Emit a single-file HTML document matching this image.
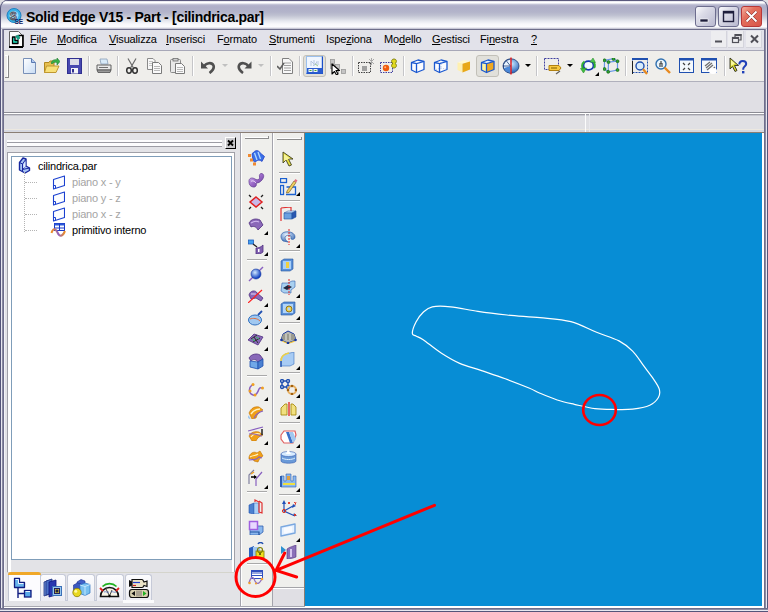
<!DOCTYPE html><html><head><meta charset="utf-8"><style>
*{margin:0;padding:0;box-sizing:border-box}
html,body{width:768px;height:612px;overflow:hidden;background:#fff;font-family:"Liberation Sans",sans-serif}
.a{position:absolute;display:block}
#title{left:0;top:0;width:768px;height:30px;border-radius:8px 8px 0 0;box-shadow:inset 1px 0 #55557a,inset -1px 0 #55557a;
background:linear-gradient(to bottom,#5b5a7e 0,#5b5a7e 1px,#d8d8e4 1px,#ffffff 2px,#ffffff 3px,#cfd0df 4px,#b6b6cd 5px,#afafc8 7px,#b3b4ca 12px,#bdbfd0 15px,#d0d2dd 18px,#e6e8ef 21px,#f8f8fb 24px,#fcfcfe 27px,#c8c8d6 28.5px,#6e6e8a 29px,#6e6e8a 30px)}
#ttxt{left:26px;top:9px;font-size:14px;letter-spacing:-0.3px;font-weight:bold;color:#000;white-space:nowrap}
.mi{position:absolute;top:33px;font-size:11px;letter-spacing:-0.15px;color:#000;white-space:nowrap}
.sep{position:absolute;width:2px;height:20px;top:56px;border-left:1px solid #c5c5c8;border-right:1px solid #fff}
.tbtn{position:absolute;border:1px solid #c2c0b8;border-radius:3px;background:#e1e0da}
.tri{position:absolute;width:0;height:0;border-left:3px solid transparent;border-right:3px solid transparent;border-top:3px solid #000}
.trg{position:absolute;width:0;height:0;border-left:2px solid transparent;border-top:2px solid transparent;border-right:2px solid #000;border-bottom:2px solid #000}
.vsep{position:absolute;height:2px;border-top:1px solid #a9a9a9;border-bottom:1px solid #fff}
.tab{position:absolute;top:574px;height:27px;border:1px solid #c6cad8;border-bottom:none;border-radius:3px 3px 0 0;background:linear-gradient(#fcfcfe,#ececf2)}
.tree{position:absolute;font-size:11px;letter-spacing:-0.2px;white-space:nowrap}
</style></head><body>
<div class="a" style="left:0;top:0;width:768px;height:612px;background:#e0dfe3"></div>
<div id="title" class="a"></div>
<div class="a" style="left:0;top:29px;width:4px;height:583px;background:linear-gradient(to right,#55557a 1px,#e8e8f0 1px,#e8e8f0 2px,#8a8aa2 2px,#8a8aa2 3px,#6e6e8c 3px)"></div>
<div class="a" style="left:764px;top:29px;width:4px;height:583px;background:linear-gradient(to right,#6e6e8c 1px,#8a8aa2 1px,#8a8aa2 2px,#e8e8f0 2px,#e8e8f0 3px,#55557a 3px)"></div>
<div class="a" style="left:0;top:608px;width:768px;height:4px;background:linear-gradient(to bottom,#6e6e8c 1px,#8a8aa2 1px,#8a8aa2 2px,#e8e8f0 2px,#e8e8f0 3px,#55557a 3px)"></div>
<svg class="a" style="left:6px;top:8px" width="18" height="17" viewBox="0 0 18 17"><circle cx="8" cy="7.5" r="7" fill="#38b0e8" stroke="#2080c0" stroke-width="1"/><circle cx="8" cy="7.5" r="4.5" fill="#a0dcf4"/><text x="4" y="11.5" font-size="10" font-weight="bold" fill="#f0f0f4" stroke="#505060" stroke-width="0.9" font-family="Liberation Sans">S</text><text x="8.5" y="16" font-size="6.5" font-weight="bold" fill="#102060" font-family="Liberation Sans">SE</text></svg>
<div id="ttxt" class="a">Solid Edge V15 - Part - [cilindrica.par]</div>
<div class="a" style="left:695px;top:6px;width:21px;height:21px;border:1px solid #6d6d8e;border-radius:3px;background:linear-gradient(135deg,#fbfbfd 0,#dcdce8 35%,#b9b9d0 100%)"></div><svg class="a" style="left:695px;top:6px" width="21" height="21" viewBox="0 0 21 21"><rect x="5" y="13" width="8" height="3" fill="#1e1e3c" stroke="#fff" stroke-width="0.6"/></svg>
<div class="a" style="left:718px;top:6px;width:21px;height:21px;border:1px solid #6d6d8e;border-radius:3px;background:linear-gradient(135deg,#fbfbfd 0,#dcdce8 35%,#b9b9d0 100%)"></div><svg class="a" style="left:718px;top:6px" width="21" height="21" viewBox="0 0 21 21"><rect x="5.5" y="5.5" width="10" height="10" fill="none" stroke="#1e1e3c" stroke-width="1.4"/><rect x="5" y="5" width="11" height="2.5" fill="#1e1e3c"/></svg>
<div class="a" style="left:741px;top:6px;width:21px;height:21px;border:1px solid #b83838;border-radius:3px;background:linear-gradient(135deg,#f4b0a0 0,#e4705e 35%,#d85448 100%)"></div><svg class="a" style="left:741px;top:6px" width="21" height="21" viewBox="0 0 21 21"><path d="M5.5 5.5 L15.5 15.5 M15.5 5.5 L5.5 15.5" stroke="#7a2020" stroke-width="3"/><path d="M5.5 5.5 L15.5 15.5 M15.5 5.5 L5.5 15.5" stroke="#fff" stroke-width="2"/></svg>
<div class="a" style="left:4px;top:30px;width:760px;height:20px;background:#e2e2ea"></div>
<div class="a" style="left:4px;top:50px;width:760px;height:1px;background:#a8a8b8"></div>
<svg class="a" style="left:9px;top:31px" width="15" height="17" viewBox="0 0 15 17"><path d="M0.5 0.5 H9.5 L13.5 4.5 V15.5 H0.5Z" fill="#fcfcfc" stroke="#606060" stroke-width="1"/><path d="M0 15 H14 V17 H0Z" fill="#000"/><path d="M9.5 4.5 H14 V16" fill="none" stroke="#000" stroke-width="1.6"/><path d="M3.5 6 H6 V9.5 H9 V12.5 H3.5Z" fill="#20e0c0" stroke="#000" stroke-width="1.3" stroke-linejoin="round"/><path d="M6.5 5 L9.5 4 L11 7 L9 9Z" fill="#10a888" stroke="#086050" stroke-width="0.5"/></svg>
<div class="mi" style="left:30px"><u>F</u>ile</div>
<div class="mi" style="left:57px"><u>M</u>odifica</div>
<div class="mi" style="left:109px"><u>V</u>isualizza</div>
<div class="mi" style="left:166px"><u>I</u>nserisci</div>
<div class="mi" style="left:217px">F<u>o</u>rmato</div>
<div class="mi" style="left:269px"><u>S</u>trumenti</div>
<div class="mi" style="left:326px">Ispe<u>z</u>iona</div>
<div class="mi" style="left:384px">Mo<u>d</u>ello</div>
<div class="mi" style="left:432px"><u>G</u>estisci</div>
<div class="mi" style="left:480px">Fi<u>n</u>estra</div>
<div class="mi" style="left:531px"><u>?</u></div>
<div class="a" style="left:711px;top:31px;width:16px;height:17px;background:#ededf0;border-right:1px solid #d4d4dc;border-bottom:1px solid #d4d4dc"></div>
<div class="a" style="left:728px;top:31px;width:16px;height:17px;background:#ededf0;border-right:1px solid #d4d4dc;border-bottom:1px solid #d4d4dc"></div>
<div class="a" style="left:746px;top:31px;width:16px;height:17px;background:#ededf0;border-right:1px solid #d4d4dc;border-bottom:1px solid #d4d4dc"></div>
<svg class="a" style="left:711px;top:31px" width="16" height="17" viewBox="0 0 16 17"><rect x="4" y="9.5" width="7" height="2" fill="#505058"/></svg>
<svg class="a" style="left:728px;top:31px" width="16" height="17" viewBox="0 0 16 17"><rect x="4.5" y="6.5" width="6" height="5" fill="none" stroke="#505058" stroke-width="1.2"/><rect x="4" y="6" width="7" height="2" fill="#505058"/><path d="M7 6 V3.5 H13 V9 H11" fill="none" stroke="#505058" stroke-width="1.2"/><rect x="7" y="3" width="6.5" height="2" fill="#505058"/></svg>
<svg class="a" style="left:746px;top:31px" width="17" height="17" viewBox="0 0 17 17"><path d="M5 4.5 L12 11.5 M12 4.5 L5 11.5" stroke="#505058" stroke-width="2"/></svg>
<div class="a" style="left:4px;top:51px;width:760px;height:30px;background:#efeeeb"></div>
<div class="a" style="left:4px;top:81px;width:760px;height:1px;background:#b0b0bc"></div>
<div class="a" style="left:5px;top:55px;width:4px;height:23px;border-top:1px solid #fff;border-right:1px solid #8a8a8a;border-bottom:1px solid #8a8a8a"></div>
<div class="a" style="left:7px;top:56px;width:1px;height:21px;background:#fff"></div>
<div class="sep" style="left:88px"></div>
<div class="sep" style="left:117px"></div>
<div class="sep" style="left:192px"></div>
<div class="sep" style="left:270px"></div>
<div class="sep" style="left:299px"></div>
<div class="sep" style="left:352px"></div>
<div class="sep" style="left:403px"></div>
<div class="sep" style="left:536px"></div>
<div class="sep" style="left:625px"></div>
<div class="sep" style="left:724px"></div>
<svg class="a" style="left:23px;top:58px" width="13" height="16" viewBox="0 0 13 16"><defs><linearGradient id="gnd" x1="0" y1="0" x2="1" y2="1"><stop offset="0" stop-color="#ffffff"/><stop offset="1" stop-color="#c8dcf4"/></linearGradient></defs><path d="M0.5 0.5 H8.5 L12.5 4.5 V15.5 H0.5Z" fill="url(#gnd)" stroke="#7890b8"/><path d="M8.5 0.5 V4.5 H12.5" fill="#b0c8f0" stroke="#5878b0"/></svg>
<svg class="a" style="left:44px;top:58px" width="16" height="16" viewBox="0 0 16 16"><path d="M0.5 4.5 H5 L6 3 H10 V14.5 H0.5Z" fill="#e8c050" stroke="#b08820"/><path d="M2.5 8 H15 L12 14.5 H0.5Z" fill="#f8e078" stroke="#c09830"/><path d="M7 5 C8 2 11 1 13 2 L13 0 L16 3.5 L13 7 L13 4.5 C11 4 9 4.5 8 6Z" fill="#38b048" stroke="#208030" stroke-width="0.6"/></svg>
<svg class="a" style="left:67px;top:58px" width="15" height="16" viewBox="0 0 15 16"><rect x="0.5" y="0.5" width="14" height="15" fill="#4848b0" stroke="#303090"/><rect x="3" y="1" width="9" height="6" fill="#dcdce8"/><rect x="4" y="10" width="7" height="5.5" fill="#f4f4f8"/><rect x="5" y="11" width="2" height="3.5" fill="#303090"/></svg>
<svg class="a" style="left:96px;top:58px" width="16" height="16" viewBox="0 0 16 16"><path d="M4 1 H11 L12 6 H5Z" fill="#d8eaf8" stroke="#8aa0b8" stroke-width="0.8"/><path d="M1 7 H15 V12 H1Z" fill="#e8e8e8" stroke="#606060"/><path d="M1 12 H15 L14 14.5 H2Z" fill="#9a9a9a" stroke="#505050" stroke-width="0.8"/><rect x="3" y="9" width="9" height="1" fill="#707070"/></svg>
<svg class="a" style="left:125px;top:58px" width="14" height="16" viewBox="0 0 14 16"><path d="M3 0.5 L8.2 9.5 M11 0.5 L5.8 9.5" stroke="#6a6a6a" stroke-width="1.2"/><ellipse cx="4" cy="12.5" rx="2.3" ry="2.7" fill="none" stroke="#303030" stroke-width="1.5"/><ellipse cx="10" cy="12.5" rx="2.3" ry="2.7" fill="none" stroke="#303030" stroke-width="1.5"/></svg>
<svg class="a" style="left:147px;top:58px" width="15" height="16" viewBox="0 0 15 16"><path d="M0.5 0.5 H6 L8 2.5 V11.5 H0.5Z" fill="#f8f8f8" stroke="#8a8a8a"/><path d="M2 3.5 H6 M2 5.5 H6 M2 7.5 H6" stroke="#b8b8b8" stroke-width="0.8"/><path d="M5.5 4.5 H11.5 L14.5 7.5 V15.5 H5.5Z" fill="#fafafa" stroke="#7a7a7a"/><path d="M7 8.5 H13 M7 10.5 H13 M7 12.5 H13" stroke="#a8a8a8" stroke-width="0.8"/></svg>
<svg class="a" style="left:170px;top:58px" width="15" height="16" viewBox="0 0 15 16"><rect x="0.5" y="1.5" width="10" height="13" rx="1" fill="#e8e8e8" stroke="#8a8a8a"/><rect x="3" y="0.5" width="5" height="2.5" fill="#d0d0d0" stroke="#707070" stroke-width="0.8"/><path d="M5.5 5.5 H11.5 L14.5 8.5 V15.5 H5.5Z" fill="#fafafa" stroke="#7a7a7a"/><path d="M7 9.5 H13 M7 11.5 H13 M7 13.5 H13" stroke="#a8a8a8" stroke-width="0.8"/></svg>
<svg class="a" style="left:200px;top:58px" width="16" height="16" viewBox="0 0 16 16"><path d="M4 8.5 C6 4.5 12 4 13.5 7.5 C14.5 10.5 12.5 13 9.5 15" fill="none" stroke="#505050" stroke-width="2.6"/><path d="M1 3.5 V10.5 H8Z" fill="#505050"/></svg>
<div class="tri" style="left:222px;top:64px;border-top-color:#c0c0c0;border-width:3px 3px 0 3px"></div>
<svg class="a" style="left:236px;top:58px" width="17" height="16" viewBox="0 0 17 16"><path d="M12.5 8.5 C10.5 4.5 4.5 4 3 7.5 C2 10.5 4 13 7 15" fill="none" stroke="#505050" stroke-width="2.6"/><path d="M15.5 3.5 V10.5 H8.5Z" fill="#505050"/></svg>
<div class="tri" style="left:258px;top:64px;border-top-color:#c0c0c0;border-width:3px 3px 0 3px"></div>
<svg class="a" style="left:277px;top:58px" width="16" height="16" viewBox="0 0 16 16"><path d="M5.5 0.5 H12 L15.5 4 V15.5 H5.5Z" fill="#f8f8f8" stroke="#808080"/><path d="M7 5 H14 M7 7.5 H14 M7 10 H14 M7 12.5 H14" stroke="#a0a0a0"/><path d="M0 8 L3 11 L7 5" fill="none" stroke="#606060" stroke-width="1.6"/></svg>
<div class="tbtn" style="left:303px;top:55px;width:23px;height:22px"></div>
<svg class="a" style="left:306px;top:56px" width="17" height="18" viewBox="0 0 17 18"><rect x="0.5" y="0.5" width="16" height="17" fill="#f0f6ff" stroke="#9cc0ec"/><path d="M16.5 0.5 V17.5 H0.5" fill="none" stroke="#1c50c8" stroke-width="1.4"/><rect x="1" y="12" width="15.5" height="5.5" fill="#2a5cd0"/><rect x="2.5" y="13" width="4" height="3" fill="#f4f8f0"/><rect x="7.5" y="13" width="4" height="3" fill="#f4f8f0"/><path d="M3.5 14.5 H5.5 M8.5 14.5 H10.5" stroke="#40a040"/><path d="M5 5 V10 M5 5 L8 8 M8 4 V10 M10 6 H13 M10 8 H13 M7 10 L11 6" stroke="#b8c8e0" stroke-width="1"/><path d="M9 8 L12 10" stroke="#a0c890" stroke-width="1"/></svg>
<svg class="a" style="left:328px;top:57px" width="19" height="18" viewBox="0 0 19 18"><g fill="#c4c4c4" stroke="#9a9a9a" stroke-width="0.8"><rect x="2.5" y="2.5" width="4" height="4"/><rect x="2.5" y="7.5" width="4" height="4"/><rect x="7.5" y="7.5" width="4" height="4"/><rect x="7.5" y="12.5" width="3" height="4"/><rect x="13.5" y="12.5" width="4" height="4"/></g><path d="M4 7 V17 L6.5 14.5 L8.5 18 L10 17 L8 13.5 L11.5 13.5Z" fill="#fff" stroke="#000" stroke-width="1.1" stroke-linejoin="round"/></svg>
<svg class="a" style="left:358px;top:58px" width="17" height="16" viewBox="0 0 17 16"><rect x="0.5" y="4.5" width="12" height="10" fill="none" stroke="#404040" stroke-dasharray="1.5 1"/><rect x="4" y="8" width="5" height="5" fill="#a0a0a0"/><path d="M11 1 L16 6 M16 1 L11 6 M13.5 0 V7" stroke="#a8a8a8"/></svg>
<svg class="a" style="left:380px;top:58px" width="18" height="16" viewBox="0 0 18 16"><rect x="0.5" y="4.5" width="12" height="10" fill="none" stroke="#4040a0" stroke-dasharray="1.5 1"/><circle cx="6" cy="10" r="3.2" fill="#f05a10"/><circle cx="5.2" cy="9.2" r="1" fill="#ffb080"/><path d="M14 1 C11 1 11 4.5 13 5.5 C10.5 6.5 11.5 10 14 10 C16.5 10 17.5 6.5 15 5.5 C17 4.5 17 1 14 1Z" fill="#e0d820" stroke="#707000" stroke-width="0.8"/></svg>
<svg class="a" style="left:410px;top:58px" width="16" height="16" viewBox="0 0 16 16"><path d="M1.5 4.5 L8 2 L14 3.5 V11.5 L6.5 14.5 L1.5 12Z" fill="#fbfcff" stroke="#1a58d0" stroke-width="1.3" stroke-linejoin="round"/><path d="M1.5 4.5 L6.5 5.7 L14 3.5 M6.5 5.7 V14.5" fill="none" stroke="#1a58d0" stroke-width="1.3"/></svg>
<svg class="a" style="left:433px;top:58px" width="16" height="16" viewBox="0 0 16 16"><path d="M1.5 4.5 L8 2 L14 3.5 V11.5 L6.5 14.5 L1.5 12Z" fill="#fbfcff" stroke="#1a58d0" stroke-width="1.3" stroke-linejoin="round"/><path d="M8 2 V10 L1.5 12 M8 10 L14 11.5" fill="none" stroke="#a8b8e0" stroke-width="0.8" stroke-dasharray="1 1"/><path d="M1.5 4.5 L6.5 5.7 L14 3.5 M6.5 5.7 V14.5" fill="none" stroke="#1a58d0" stroke-width="1.3"/></svg>
<svg class="a" style="left:456px;top:58px" width="16" height="16" viewBox="0 0 16 16"><path d="M1.5 4.5 L8 2 L14 3.5 L6.5 5.7Z" fill="#fff8d0"/><path d="M1.5 4.5 L6.5 5.7 V14.5 L1.5 12Z" fill="#fff0b0"/><path d="M6.5 5.7 L14 3.5 V11.5 L6.5 14.5Z" fill="#e8a818"/></svg>
<div class="tbtn" style="left:476px;top:55px;width:23px;height:22px"></div>
<svg class="a" style="left:480px;top:58px" width="16" height="16" viewBox="0 0 16 16"><path d="M1.5 4.5 L8 2 L14 3.5 L6.5 5.7Z" fill="#e8f4ff"/><path d="M1.5 4.5 L6.5 5.7 V14.5 L1.5 12Z" fill="#fff2a0"/><path d="M6.5 5.7 L14 3.5 V11.5 L6.5 14.5Z" fill="#f0a820"/><path d="M1.5 4.5 L8 2 L14 3.5 V11.5 L6.5 14.5 L1.5 12Z" fill="none" stroke="#1a58d0" stroke-width="1.3" stroke-linejoin="round"/><path d="M1.5 4.5 L6.5 5.7 L14 3.5 M6.5 5.7 V14.5" fill="none" stroke="#1a58d0" stroke-width="1.3"/></svg>
<svg class="a" style="left:502px;top:57px" width="18" height="18" viewBox="0 0 18 18"><defs><radialGradient id="gsp" cx="0.55" cy="0.35" r="0.7"><stop offset="0" stop-color="#c8e8ff"/><stop offset="1" stop-color="#1050b0"/></radialGradient></defs><ellipse cx="9" cy="9" rx="8" ry="7.2" fill="url(#gsp)" stroke="#203e78" stroke-width="0.8"/><path d="M8.5 2 L4 3.5 L1.5 7.5 L1.5 11 L4 14.5 L8.5 16" fill="#e8f4ff" stroke="#203e78" stroke-width="0.9"/><path d="M1.5 9 H8.5 M4 3.5 L8.5 9 M8.5 9 L4 14.5" stroke="#203e78" stroke-width="0.8" fill="none"/><path d="M1.8 11 L4 14.5 L8.5 16 V9Z" fill="#4a88d8"/><path d="M9 0.5 V17.5" stroke="#e81818" stroke-width="1.4"/></svg>
<div class="tri" style="left:525px;top:64px;border-left:3px solid transparent;border-right:3px solid transparent;border-top:3px solid #000"></div>
<svg class="a" style="left:544px;top:58px" width="18" height="17" viewBox="0 0 18 17"><rect x="0.5" y="0.5" width="14" height="11" fill="none" stroke="#4040a0" stroke-dasharray="2 1"/><path d="M5 7.5 H15 L17 10 L15 12.5 H5Z" fill="#f8c840" stroke="#b08010"/><path d="M7 10 H13" stroke="#806000"/><path d="M12 16 L16 13" stroke="#606060" stroke-width="1.2"/></svg>
<div class="tri" style="left:567px;top:64px"></div>
<svg class="a" style="left:580px;top:58px" width="18" height="16" viewBox="0 0 18 16"><ellipse cx="8.5" cy="7.5" rx="5" ry="4.3" fill="#f4faff" stroke="#1838b0" stroke-width="1.8"/><path d="M4.5 3.5 C1.5 5.5 1.5 9.5 3.5 11.5" fill="none" stroke="#30b030" stroke-width="2"/><path d="M0.5 10.5 L6.5 10 L3.5 15Z" fill="#40c040" stroke="#208020" stroke-width="0.5"/><path d="M12.5 3 C15 4.5 15.5 8 14 10" fill="none" stroke="#30b030" stroke-width="2"/><path d="M10 4 L15.5 4.5 L13 0Z" fill="#50c850" stroke="#208020" stroke-width="0.5"/></svg>
<div class="trg" style="left:595px;top:72px;border-width:2px"></div>
<svg class="a" style="left:603px;top:58px" width="17" height="16" viewBox="0 0 17 16"><path d="M1.5 2.3 L5.5 4.1 L14.5 3.2 L10.5 0.7Z M1.5 2.3 L1.4 11 L5.2 13.8 L14.5 12 L14.5 3.2 M5.5 4.1 L5.2 13.8" fill="none" stroke="#6a98e8" stroke-width="1.2"/><g fill="#30a030" stroke="#0a600a" stroke-width="0.6"><circle cx="1.5" cy="2.3" r="1.5"/><circle cx="5.5" cy="4.1" r="1.5"/><circle cx="10.5" cy="1" r="1.5"/><circle cx="14.5" cy="3.2" r="1.5"/><circle cx="1.5" cy="11" r="1.5"/><circle cx="5.2" cy="13.8" r="1.5"/><circle cx="14.5" cy="12" r="1.5"/></g></svg>
<svg class="a" style="left:632px;top:58px" width="17" height="17" viewBox="0 0 17 17"><rect x="0.5" y="0.5" width="15" height="14" fill="none" stroke="#2050b0" stroke-dasharray="2 1"/><rect x="0" y="0" width="16" height="2" fill="#2050b0"/><circle cx="8" cy="8" r="4" fill="#d8ecfc" stroke="#2050b0" stroke-width="1.4"/><path d="M11 11 L15 16" stroke="#e88a20" stroke-width="2.2"/><path d="M0.5 3 V16" stroke="#202020" stroke-width="1"/></svg>
<svg class="a" style="left:655px;top:58px" width="16" height="16" viewBox="0 0 16 16"><circle cx="6" cy="6" r="5" fill="#e8f4fc" stroke="#3070b0" stroke-width="1.4"/><path d="M6 3 V6 M4 6 H8 M4 8 H8" stroke="#202020" stroke-width="1"/><path d="M9.5 9.5 L15 15" stroke="#e88a20" stroke-width="2.4"/></svg>
<svg class="a" style="left:679px;top:58px" width="15" height="15" viewBox="0 0 15 15"><rect x="0.5" y="0.5" width="14" height="14" fill="#f4f8fc" stroke="#2050b0"/><rect x="0" y="0" width="15" height="2.5" fill="#2050b0"/><path d="M4 5 L6 7 M11 5 L9 7 M4 12 L6 10 M11 12 L9 10" stroke="#404040" stroke-width="1.2"/></svg>
<svg class="a" style="left:701px;top:58px" width="17" height="16" viewBox="0 0 17 16"><rect x="0.5" y="0.5" width="15" height="14" fill="#f4f8fc" stroke="#2050b0"/><rect x="0" y="0" width="16" height="2.5" fill="#2050b0"/><path d="M4 8 L9 4 M5 10 L11 5 M6 12 L12 7 M9 14 L14 9" stroke="#707070" stroke-width="1.3"/><ellipse cx="12" cy="13" rx="4" ry="3" fill="#fff"/></svg>
<svg class="a" style="left:729px;top:57px" width="20" height="18" viewBox="0 0 20 18"><path d="M1 1 L1 12 L3.5 9.5 L6 14.5 L8 13.5 L5.5 8.5 L9.5 8.5Z" fill="#d8d830" stroke="#303020" stroke-width="0.9" stroke-linejoin="round"/><path d="M2 3 L2 9 L6 6.5Z" fill="#f8f8a0"/><path d="M10.3 7.5 C10.3 5 11.8 4 13.8 4 C15.8 4 17.2 5.2 17.2 7 C17.2 9 14.2 9.5 14.2 12 V12.8" fill="none" stroke="#2040b8" stroke-width="2"/><rect x="13" y="14" width="2.4" height="2.4" fill="#2040b8"/></svg>
<div class="a" style="left:4px;top:82px;width:760px;height:30px;background:#e0dfe4"></div>
<div class="a" style="left:4px;top:112px;width:760px;height:21px;background:linear-gradient(to bottom,#8c8c94 0,#8c8c94 1px,#ffffff 1px,#ffffff 2px,#a0a0a8 2px,#a0a0a8 3px,#c8c8d0 3px,#c8c8d0 4px,#e0e0e4 4px,#e0e0e4 17px,#ece8e0 17px,#ece8e0 18px,#d6d8e0 18px,#d6d8e0 20px,#8a7e74 20px)"></div>
<div class="a" style="left:585px;top:113px;width:1px;height:19px;background:#fcfcfc"></div>
<div class="a" style="left:589px;top:114px;width:1px;height:18px;background:#e8e8ec"></div>
<div class="a" style="left:4px;top:133px;width:236px;height:474px;background:#e3e3e7"></div>
<div class="a" style="left:4px;top:133px;width:1px;height:474px;background:#f4f4f8"></div>
<div class="a" style="left:7px;top:140px;width:215px;height:2px;background:#fcfcfd"></div>
<div class="a" style="left:7px;top:142px;width:215px;height:1px;background:#9c9ca4"></div>
<div class="a" style="left:7px;top:143px;width:215px;height:3px;background:#fcfcfd"></div>
<div class="a" style="left:7px;top:146px;width:215px;height:1px;background:#9c9ca4"></div>
<div class="a" style="left:225px;top:137px;width:11px;height:12px;background:#c8c8cc;border-top:1px solid #fff;border-left:1px solid #fff;border-right:1px solid #000;border-bottom:1px solid #000"></div>
<svg class="a" style="left:225px;top:137px" width="11" height="12" viewBox="0 0 11 12"><path d="M3 3.5 L8 8.5 M8 3.5 L3 8.5" stroke="#000" stroke-width="1.8"/></svg>
<div class="a" style="left:7px;top:152px;width:228px;height:420px;border-top:1px solid #a0a0a8;border-left:1px solid #a0a0a8;border-right:1px solid #a0a0a8"></div>
<div class="a" style="left:8px;top:153px;width:226px;height:419px;border-top:3px solid #fff;border-left:3px solid #fff;border-right:2px solid #fff"></div>
<div class="a" style="left:7px;top:572px;width:228px;height:1px;background:#d4d4cc"></div>
<div class="a" style="left:11px;top:156px;width:221px;height:404px;background:#fff;border:1px solid #7f9db9"></div>
<svg class="a" style="left:18px;top:157px" width="13" height="17" viewBox="0 0 13 17"><path d="M1.5 5.5 L5 1 L8 2 V9 L11.5 11 V13.5 L7 16 L1.5 13Z" fill="#a8c4f4" stroke="#1828a0" stroke-width="1.4" stroke-linejoin="round"/><path d="M1.5 5.5 L4.5 7 V14.5 M4.5 7 L8 2 M8 9 L4.5 12.5 L11.5 11" fill="none" stroke="#1828a0" stroke-width="1"/><path d="M5.5 7.5 L7.5 4 V9.5 L5.5 11.5Z" fill="#e0ecff"/></svg>
<div class="tree" style="left:38px;top:160px;color:#000">cilindrica.par</div>
<div class="a" style="left:24px;top:172px;width:1px;height:60px;border-left:1px dotted #b4b4b4"></div>
<div class="a" style="left:25px;top:182px;width:12px;height:1px;border-top:1px dotted #b4b4b4"></div>
<div class="a" style="left:25px;top:198px;width:12px;height:1px;border-top:1px dotted #b4b4b4"></div>
<div class="a" style="left:25px;top:214px;width:12px;height:1px;border-top:1px dotted #b4b4b4"></div>
<div class="a" style="left:25px;top:230px;width:12px;height:1px;border-top:1px dotted #b4b4b4"></div>
<svg class="a" style="left:52px;top:175px" width="13" height="15" viewBox="0 0 13 15"><path d="M1.5 4.5 L12.5 1 V10.5 L1.5 14Z" fill="#fcfdff" stroke="#1a40d0" stroke-width="1.1" stroke-linejoin="round"/><path d="M1.5 10.5 H3.5 V13" fill="none" stroke="#1a40d0" stroke-width="1"/></svg>
<div class="tree" style="left:72px;top:176px;color:#a4a4a4">piano x - y</div>
<svg class="a" style="left:52px;top:191px" width="13" height="15" viewBox="0 0 13 15"><path d="M1.5 4.5 L12.5 1 V10.5 L1.5 14Z" fill="#fcfdff" stroke="#1a40d0" stroke-width="1.1" stroke-linejoin="round"/><path d="M1.5 10.5 H3.5 V13" fill="none" stroke="#1a40d0" stroke-width="1"/></svg>
<div class="tree" style="left:72px;top:192px;color:#a4a4a4">piano y - z</div>
<svg class="a" style="left:52px;top:207px" width="13" height="15" viewBox="0 0 13 15"><path d="M1.5 4.5 L12.5 1 V10.5 L1.5 14Z" fill="#fcfdff" stroke="#1a40d0" stroke-width="1.1" stroke-linejoin="round"/><path d="M1.5 10.5 H3.5 V13" fill="none" stroke="#1a40d0" stroke-width="1"/></svg>
<div class="tree" style="left:72px;top:208px;color:#a4a4a4">piano x - z</div>
<svg class="a" style="left:50px;top:223px" width="17" height="15" viewBox="0 0 17 15"><defs><linearGradient id="gwv" x1="0" x2="1"><stop offset="0" stop-color="#f09020"/><stop offset="0.5" stop-color="#9060c0"/><stop offset="1" stop-color="#f09020"/></linearGradient></defs><rect x="4.5" y="0.5" width="10" height="7" fill="#f8fbff" stroke="#1838c8"/><rect x="4.5" y="0.5" width="10" height="2" fill="#2a58d8"/><path d="M4.5 5 H14.5 M9.5 0.5 V7.5" stroke="#1838c8" stroke-width="1"/><path d="M1.5 10 C3 5 5.5 5 7.5 9.5 C9.5 14 12.5 14 15 8" fill="none" stroke="url(#gwv)" stroke-width="2"/></svg>
<div class="tree" style="left:72px;top:224px;color:#000">primitivo interno</div>
<div class="a" style="left:8px;top:600px;width:115px;height:1px;background:#c4c8d8"></div>
<div class="tab" style="left:8px;width:33px;top:572px;height:29px;background:#fcfcfe;border-color:#c0c4d0"></div>
<div class="a" style="left:8px;top:572px;width:33px;height:3px;background:#f0a828;border-radius:3px 3px 0 0"></div>
<div class="tab" style="left:40px;width:26px"></div>
<div class="tab" style="left:67px;width:28px"></div>
<div class="tab" style="left:96px;width:28px"></div>
<div class="tab" style="left:125px;width:27px"></div>
<div class="a" style="left:123px;top:600px;width:31px;height:3px;background:#fbfbfc"></div>
<svg class="a" style="left:13px;top:577px" width="20" height="22" viewBox="0 0 20 22"><path d="M1.5 1.5 H6.5 V5.5 H11.5 V10.5 H1.5Z" fill="#6ab4ec" stroke="#101c80" stroke-width="1.3" stroke-linejoin="round"/><path d="M2.5 2.5 H5.5 V6.5 H10.5" fill="none" stroke="#e8f4ff" stroke-width="1"/><path d="M5 10.5 V21 M5 16.5 H11" stroke="#101c80" stroke-width="1.4"/><rect x="11.5" y="13.5" width="6.5" height="6.5" fill="#58a8e8" stroke="#101c80" stroke-width="1.3"/><path d="M12.5 14.5 H17" stroke="#e8f4ff" stroke-width="1"/></svg>
<svg class="a" style="left:43px;top:577px" width="20" height="21" viewBox="0 0 20 21"><path d="M1 5 L7 3 V17 L1 19Z" fill="#6a90d8" stroke="#203080" stroke-width="0.8"/><path d="M3 4 L9 2 V16 L3 18Z" fill="#4a70c8" stroke="#203080" stroke-width="0.8"/><path d="M6 5 L13 3 V18 L6 20Z" fill="#2838b0" stroke="#101880" stroke-width="0.8"/><rect x="9.5" y="9.5" width="9" height="9" fill="#9ac8f0" stroke="#3a70b8"/><rect x="11.5" y="11.5" width="5" height="5" fill="#e8d840" stroke="#202060" stroke-width="1"/><rect x="12.5" y="12.5" width="3" height="3" fill="#202040"/></svg>
<svg class="a" style="left:72px;top:578px" width="19" height="20" viewBox="0 0 19 20"><path d="M5 4 L9 1.5 L13 3 V9 L9 11 L5 9.5Z" fill="#4060c8" stroke="#203090" stroke-width="0.6"/><path d="M1.5 7 L5.5 5 L9 6 V14 L5 16 L1.5 14Z" fill="#3a58c0" stroke="#203090" stroke-width="0.6"/><path d="M8 7 L13 5 L18 6.5 V15 L13 17.5 L8 15.5Z" fill="#78c0f0" stroke="#2a70c0" stroke-width="0.7"/><path d="M8 7 L13 8.5 L18 6.5 M13 8.5 V17.5" fill="none" stroke="#d8f0ff" stroke-width="0.8"/><circle cx="5" cy="14.5" r="4.2" fill="#e8d820" stroke="#807000" stroke-width="0.7"/><circle cx="3.8" cy="13.2" r="1.5" fill="#fff8a0"/></svg>
<svg class="a" style="left:99px;top:580px" width="21" height="18" viewBox="0 0 21 18"><path d="M1.5 16.5 A9 9 0 0 1 19.5 16.5Z" fill="#f8f4e8" stroke="#101010" stroke-width="1.6"/><path d="M3.5 6.5 A10 10 0 0 1 17.5 6.5" fill="none" stroke="#20b020" stroke-width="1.6"/><path d="M1 8 L4 11 M20 8 L17 11" stroke="#e02020" stroke-width="1.8"/><path d="M10.5 16 L7 9 M10.5 16 L13 10" stroke="#303030" stroke-width="0.9"/><circle cx="10.5" cy="16" r="1.2" fill="#000"/><path d="M5 12 C7 11 8 13 10 12 M12 12 C14 11 15 13 17 12" stroke="#4060c0" stroke-width="0.7" fill="none"/></svg>
<svg class="a" style="left:128px;top:578px" width="22" height="21" viewBox="0 0 22 21"><path d="M4 1.5 H14 C15 1.5 15.5 3 16 4 L19 3 V8.5 L16 7.5 C15.5 9 15 9.5 14 9.5 H4Z" fill="#ece4c8" stroke="#101010" stroke-width="1.2"/><path d="M1 2 L4 3.5 V7.5 L1 9Z" fill="#101010"/><path d="M5 4.5 H12" stroke="#2040d0" stroke-width="1.2"/><path d="M5 7.5 H8" stroke="#e02020" stroke-width="1.2"/><rect x="1.5" y="11.5" width="19" height="8" rx="2.5" fill="#d8d0b0" stroke="#101010" stroke-width="1.2"/><rect x="8" y="12.5" width="6" height="6" fill="#a8a090"/><path d="M7 13 L3.5 15.5 L7 18Z" fill="#101010"/><path d="M15 13 L18.5 15.5 L15 18Z" fill="#20b020"/></svg>
<div class="a" style="left:240px;top:133px;width:1px;height:474px;background:#a4a4ac"></div>
<div class="a" style="left:241px;top:133px;width:31px;height:474px;background:#efefec;border-left:1px solid #fff"></div>
<div class="a" style="left:272px;top:133px;width:1px;height:474px;background:#a4a4ac"></div>
<div class="a" style="left:273px;top:133px;width:32px;height:454px;background:#efefec;border-left:1px solid #fff"></div>
<div class="a" style="left:273px;top:587px;width:31px;height:20px;background:#e0dfe4;border-top:1px solid #a4a4a8"></div>
<div class="a" style="left:273px;top:588px;width:31px;height:1px;background:#fff"></div>
<div class="a" style="left:245px;top:137px;width:24px;height:1px;background:#fff"></div>
<div class="a" style="left:245px;top:138px;width:24px;height:1px;background:#8c8c8c"></div>
<div class="a" style="left:268px;top:136px;width:1px;height:3px;background:#8c8c8c"></div>
<div class="a" style="left:277px;top:138px;width:25px;height:1px;background:#fff"></div>
<div class="a" style="left:277px;top:139px;width:25px;height:1px;background:#8c8c8c"></div>
<div class="a" style="left:301px;top:137px;width:1px;height:3px;background:#8c8c8c"></div>
<div class="vsep" style="left:247px;top:259px;width:20px"></div>
<div class="vsep" style="left:247px;top:375px;width:20px"></div>
<div class="vsep" style="left:247px;top:491px;width:20px"></div>
<div class="vsep" style="left:247px;top:563px;width:20px"></div>
<div class="vsep" style="left:279px;top:172px;width:21px"></div>
<div class="vsep" style="left:279px;top:200px;width:21px"></div>
<div class="vsep" style="left:279px;top:250px;width:21px"></div>
<div class="vsep" style="left:279px;top:322px;width:21px"></div>
<div class="vsep" style="left:279px;top:372px;width:21px"></div>
<div class="vsep" style="left:279px;top:422px;width:21px"></div>
<div class="vsep" style="left:279px;top:494px;width:21px"></div>
<svg class="a" style="left:248px;top:149px" width="17" height="17" viewBox="0 0 17 17"><path d="M4 5 C6 2 9 0.5 11 2.5 C13 4.5 14.5 6 16.5 7.5 L14 12.5 C12 11 10 10.5 8 12.5 C7 13.5 6 13 5 11.5Z" fill="#3a70e8" stroke="#1838c0" stroke-width="0.7"/><path d="M6.5 4 L9 11 M10 3 L12.5 10" stroke="#b0d8ff" stroke-width="1.3"/><rect x="0" y="5" width="3" height="3" fill="#f08a30"/><rect x="2" y="9.5" width="3" height="3" fill="#f08a30"/><rect x="5" y="13.5" width="3" height="3" fill="#f08a30"/></svg>
<svg class="a" style="left:248px;top:172px" width="17" height="16" viewBox="0 0 17 16"><defs><linearGradient id="gsw" x1="0" y1="0" x2="1" y2="1"><stop offset="0" stop-color="#e0c8f8"/><stop offset="0.5" stop-color="#9a68c8"/><stop offset="1" stop-color="#603890"/></linearGradient></defs><path d="M1 10 C0.5 6 4 5 7 7 C9.5 8.5 12 7.5 11.5 5 C11 3 12 1 14 1.5 C16.5 2.5 16 5.5 14 8 C12 10.5 10 11 8 11 C9 13 8 15.5 5 15 C2 14.5 1.2 12.5 1 10Z" fill="url(#gsw)" stroke="#603890" stroke-width="0.7"/><path d="M3 9.5 C4.5 8 7 9.5 8 11" stroke="#f4e8ff" stroke-width="1" fill="none"/></svg>
<svg class="a" style="left:248px;top:194px" width="16" height="16" viewBox="0 0 16 16"><path d="M8 3 L14 8 L8 13 L2 8Z" fill="#c8b8e8" stroke="#e02020" stroke-width="1.5"/><path d="M1 1 L3 3 M15 1 L13 3 M1 15 L3 13 M15 15 L13 13" stroke="#202020" stroke-width="1.3"/></svg>
<svg class="a" style="left:248px;top:217px" width="16" height="14" viewBox="0 0 16 14"><path d="M1 6 C3 2 8 1 12 3 L15 8 L10 13 C8 9 5 9 3 10Z" fill="#8a68b8" stroke="#503080" stroke-width="0.8"/><path d="M3 6 C6 4 9 4 11 5" stroke="#d0b8f0" stroke-width="1.2" fill="none"/></svg>
<div class="trg" style="left:264px;top:231px"></div>
<svg class="a" style="left:248px;top:238px" width="16" height="16" viewBox="0 0 16 16"><rect x="0.5" y="2" width="5" height="4" fill="#40a0f0" stroke="#2060c0" stroke-width="0.8"/><path d="M5 6 L9 9" stroke="#202020" stroke-width="1.3"/><path d="M8 10 C11 10 13 9 15 7 V14 C13 16 10 16 8 16Z" fill="#8060b0" stroke="#503080" stroke-width="0.8"/><rect x="10" y="11" width="1.5" height="3" fill="#fff"/></svg>
<div class="trg" style="left:264px;top:252px"></div>
<svg class="a" style="left:248px;top:266px" width="16" height="16" viewBox="0 0 16 16"><defs><radialGradient id="gbs" cx="0.4" cy="0.35" r="0.6"><stop offset="0" stop-color="#d0e8ff"/><stop offset="1" stop-color="#1040c0"/></radialGradient></defs><path d="M1 15 L15 1" stroke="#8860c0" stroke-width="1.4"/><circle cx="8" cy="8" r="5" fill="url(#gbs)" stroke="#1838a0" stroke-width="0.6"/></svg>
<svg class="a" style="left:248px;top:289px" width="16" height="14" viewBox="0 0 16 14"><path d="M1 6 C2 1 8 1 9 4 L15 9 L13 12 L8 9 L3 10Z" fill="#8868b8" stroke="#503080" stroke-width="0.8"/><path d="M3 5 H8" stroke="#d8c8f0" stroke-width="1.2"/><path d="M0 14 L14 1" stroke="#ff2020" stroke-width="1.2"/></svg>
<div class="trg" style="left:264px;top:303px"></div>
<svg class="a" style="left:248px;top:310px" width="16" height="16" viewBox="0 0 16 16"><ellipse cx="7" cy="10" rx="6.5" ry="5" fill="#a0c8f0" stroke="#3070c0" stroke-width="1"/><path d="M2 9 C5 8 9 8 12 11" stroke="#e07040" stroke-width="1" fill="none"/><path d="M10 5 L14 1" stroke="#2050b0" stroke-width="1.8"/></svg>
<div class="trg" style="left:264px;top:325px"></div>
<svg class="a" style="left:248px;top:333px" width="16" height="13" viewBox="0 0 16 13"><path d="M0 7 L6 1 L15 4 L10 12Z" fill="#8868b8" stroke="#503080" stroke-width="0.8"/><path d="M3 6 L9 2 M5 9 L12 5 M6 4 L10 10" stroke="#303030" stroke-width="1"/><path d="M4 6 L7 8 M8 4 L11 6" stroke="#30c060" stroke-width="1"/></svg>
<div class="trg" style="left:264px;top:347px"></div>
<svg class="a" style="left:248px;top:353px" width="16" height="17" viewBox="0 0 16 17"><path d="M1 5 C3 1 9 0 12 2 L15 6 L10 9 C8 6 5 6 3 8Z" fill="#8868b8" stroke="#503080" stroke-width="0.8"/><path d="M2 8 L10 9 V16 L2 14Z" fill="#70a8e8" stroke="#2050b0" stroke-width="0.8"/><path d="M10 9 L15 6 V13 L10 16Z" fill="#4a80d0" stroke="#2050b0" stroke-width="0.8"/></svg>
<svg class="a" style="left:248px;top:382px" width="16" height="15" viewBox="0 0 16 15"><path d="M4 3 C0 6 1 12 5 13 C8 14 10 10 11 7 C12 5 13 6 14 6" fill="none" stroke="#8860c0" stroke-width="1.5"/><circle cx="5" cy="2.5" r="1.5" fill="#f0a020"/><circle cx="2" cy="9" r="1.5" fill="#f0a020"/><circle cx="7" cy="13" r="1.5" fill="#f0a020"/><circle cx="14.5" cy="6" r="1.5" fill="#f0a020"/></svg>
<div class="trg" style="left:264px;top:397px"></div>
<svg class="a" style="left:248px;top:404px" width="16" height="15" viewBox="0 0 16 15"><path d="M1 9 C3 4 7 2 11 3 L15 6 C12 7 9 10 8 14 L4 15Z" fill="#f0a018" stroke="#c07000" stroke-width="0.6"/><path d="M3 10 C5 7 8 5 12 5" stroke="#fff2c0" stroke-width="1.4" fill="none"/><path d="M6 14 C8 10 11 8 15 7" stroke="#8860c0" stroke-width="1.2" fill="none"/><path d="M0 12 L2 15" stroke="#a0c8f0" stroke-width="1.5"/></svg>
<svg class="a" style="left:248px;top:426px" width="16" height="15" viewBox="0 0 16 15"><path d="M0 5 L15 1" stroke="#8860c0" stroke-width="1.2"/><path d="M1 10 C3 6 7 5 11 6 L15 9 C12 10 9 12 8 15 L4 15Z" fill="#f0a018" stroke="#c07000" stroke-width="0.6"/><path d="M3 11 C5 8 9 7 12 8" stroke="#fff2c0" stroke-width="1.3" fill="none"/><path d="M1 8 C5 7 9 9 14 10" stroke="#8860c0" stroke-width="1" fill="none"/><path d="M14 3 V9" stroke="#202020" stroke-width="1.5"/></svg>
<div class="trg" style="left:264px;top:441px"></div>
<svg class="a" style="left:248px;top:449px" width="16" height="14" viewBox="0 0 16 14"><path d="M1 8 C2 4 6 2 9 4 L12 2 L15 7 C13 8 11 10 10 13 L6 12 C5 9 3 9 1 10Z" fill="#f0a018" stroke="#c07000" stroke-width="0.6"/><path d="M2 8 C5 6 8 7 10 5" stroke="#fff2c0" stroke-width="1.2" fill="none"/><path d="M1 11 C4 10 8 12 11 8 L14 9" stroke="#8860c0" stroke-width="1.2" fill="none"/></svg>
<svg class="a" style="left:248px;top:469px" width="16" height="17" viewBox="0 0 16 17"><path d="M1 15 V6 L6 1" fill="none" stroke="#8080a0" stroke-width="1.2"/><path d="M8 17 V10 L14 3" fill="none" stroke="#8860c0" stroke-width="1.2"/><path d="M3 5 L6 3" stroke="#f0a020" stroke-width="1.5"/><path d="M3 8 L8 8" stroke="#000" stroke-width="1.5"/><path d="M6 6 L9 8 L6 10Z" fill="#000"/></svg>
<div class="trg" style="left:264px;top:485px"></div>
<svg class="a" style="left:248px;top:499px" width="16" height="15" viewBox="0 0 16 15"><path d="M1 6 L6 4 V15 L1 14Z" fill="#4a80d0" stroke="#2050b0" stroke-width="0.6"/><path d="M6 4 H11 V15 H6Z" fill="#a8d0f8" stroke="#4070c0" stroke-width="0.6"/><path d="M7 3 V1 L11 3 V13 L14 14 V4 L11 2" fill="none" stroke="#e03030" stroke-width="1.2"/></svg>
<svg class="a" style="left:248px;top:520px" width="16" height="15" viewBox="0 0 16 15"><path d="M2 8 L6 6 H15 V12 L11 15 H2Z" fill="#8ab8ee" stroke="#3060b0" stroke-width="0.8"/><rect x="1.5" y="1.5" width="8" height="8" fill="#e8d8ff" stroke="#a060e0" stroke-width="1.5"/><path d="M2 12 H11 V15" stroke="#2050a0" stroke-width="1.2" fill="none"/></svg>
<svg class="a" style="left:248px;top:542px" width="17" height="16" viewBox="0 0 17 16"><path d="M1 6 L6 4 V16 L1 15Z" fill="#2a60c0"/><rect x="5" y="5" width="7" height="10" fill="#a0c8f0"/><path d="M10 2 C11 0 14 0 15 2" stroke="#2050b0" stroke-width="1.5" fill="none"/><rect x="8" y="9" width="8" height="7" fill="#f0e020" stroke="#808000" stroke-width="0.8"/><circle cx="12" cy="8" r="2.5" fill="none" stroke="#808000" stroke-width="1.2"/><circle cx="12" cy="12" r="1" fill="#404000"/></svg>
<svg class="a" style="left:248px;top:570px" width="16" height="15" viewBox="0 0 16 15"><rect x="3.5" y="0.5" width="11" height="8" fill="#fff" stroke="#3050c0"/><path d="M3.5 3 H14.5 M3.5 5.5 H14.5" stroke="#3050c0"/><rect x="3" y="0" width="12" height="2" fill="#3050c0"/><path d="M1 13 C3 6 5 6 7 11 C9 15 11 14 14 9" fill="none" stroke="#9070c0" stroke-width="1.3"/><circle cx="1.5" cy="13" r="1.3" fill="#f0a030"/><circle cx="14" cy="9" r="1.3" fill="#f0a030"/><circle cx="8" cy="13.5" r="1.1" fill="#f0a030"/></svg>
<svg class="a" style="left:282px;top:151px" width="12" height="16" viewBox="0 0 12 16"><path d="M1 1 L1 12 L4 9 L7 15 L9.5 14 L6.5 8 L11 8Z" fill="#e8e040" stroke="#404020" stroke-width="0.9" stroke-linejoin="round"/><path d="M2 3 L2 10 L8 7.5" fill="#fcfcc0" opacity="0.7"/></svg>
<svg class="a" style="left:280px;top:178px" width="18" height="18" viewBox="0 0 18 18"><rect x="0.5" y="0.5" width="6" height="4" fill="none" stroke="#1a60d0" stroke-width="1.3"/><rect x="0.5" y="7.5" width="3" height="9" fill="none" stroke="#1a60d0" stroke-width="1.3"/><path d="M6.5 9 H15.5 V16.5 H6" fill="none" stroke="#1a60d0" stroke-width="1.3"/><path d="M7 13 L14 3 L16 4.5 L9 14.5 L6.5 15Z" fill="#f0d060" stroke="#806020" stroke-width="0.7"/><path d="M14 3 L15.5 1 L17.5 2.5 L16 4.5Z" fill="#e07080"/></svg>
<div class="trg" style="left:296px;top:192px"></div>
<svg class="a" style="left:280px;top:207px" width="17" height="15" viewBox="0 0 17 15"><path d="M1 1 L11 0 V4 M1 1 V14" fill="none" stroke="#e03030" stroke-width="1.2"/><path d="M4 6 L8 4 H16 L12 6Z" fill="#e0f0ff" stroke="#3060b0" stroke-width="0.6"/><path d="M4 6 H12 V12 H4Z" fill="#6aa0e0" stroke="#2050a0" stroke-width="0.6"/><path d="M12 6 L16 4 V10 L12 12Z" fill="#2a58b0" stroke="#2050a0" stroke-width="0.6"/></svg>
<svg class="a" style="left:280px;top:229px" width="17" height="16" viewBox="0 0 17 16"><defs><radialGradient id="gto" cx="0.4" cy="0.3" r="0.8"><stop offset="0" stop-color="#e8f4ff"/><stop offset="1" stop-color="#2a60b0"/></radialGradient></defs><path d="M3 12 C0 9 0 4 5 3 C10 2 15 4 15 8 C15 10 13 11 11 10 L11 7 C9 6 6 6 5 8 C5 10 6 12 8 13 Z" fill="url(#gto)" stroke="#2050a0" stroke-width="0.6"/><path d="M9 0 V16" stroke="#e02020" stroke-width="1" stroke-dasharray="2 1"/></svg>
<div class="trg" style="left:296px;top:244px"></div>
<svg class="a" style="left:280px;top:258px" width="14" height="14" viewBox="0 0 14 14"><path d="M1 3 L4 1 H13 V11 L10 13 H1Z" fill="#5a90d8" stroke="#2050a0" stroke-width="0.6"/><rect x="3" y="3" width="8" height="8" fill="#a8d0f8"/><rect x="6" y="4" width="3" height="6" fill="#f0d040"/></svg>
<svg class="a" style="left:280px;top:279px" width="17" height="16" viewBox="0 0 17 16"><path d="M2 4 H8 L12 2 H15 V8 L11 11 V14 H4 L1 12Z" fill="#a8d0f0" stroke="#3060b0" stroke-width="0.6"/><path d="M3 9 L8 6 L12 8 L7 11Z" fill="#202840"/><path d="M9 0 V16" stroke="#e02020" stroke-width="1" stroke-dasharray="2 1"/></svg>
<div class="trg" style="left:296px;top:294px"></div>
<svg class="a" style="left:280px;top:301px" width="16" height="15" viewBox="0 0 16 15"><path d="M1 3 L4 1 H15 V12 L12 14 H1Z" fill="#5a90d8" stroke="#2050a0" stroke-width="0.6"/><rect x="3" y="3" width="10" height="9" fill="#b0d4f8"/><circle cx="9" cy="8" r="3" fill="#f0d040" stroke="#806000" stroke-width="0.8"/><circle cx="9" cy="8" r="1.4" fill="#b0d4f8"/></svg>
<div class="trg" style="left:296px;top:316px"></div>
<svg class="a" style="left:280px;top:330px" width="17" height="14" viewBox="0 0 17 14"><path d="M3 4 L8 1 L14 4 L16 10 L8 13 L1 10Z" fill="#b8b8b0" stroke="#1838a0" stroke-width="1"/><path d="M3 4 L14 4 L16 10 L1 10Z" fill="#9a9a90"/><path d="M1 10 L8 13 L16 10 L14 12 L8 14 L3 12Z" fill="#f0c030"/><path d="M6 4 V10 M10 4 V10" stroke="#e8e8e0" stroke-width="1"/><circle cx="1.5" cy="10" r="1.3" fill="#1838a0"/><circle cx="15.5" cy="10" r="1.3" fill="#1838a0"/><circle cx="8" cy="13" r="1.3" fill="#1838a0"/></svg>
<svg class="a" style="left:280px;top:352px" width="15" height="15" viewBox="0 0 15 15"><path d="M1 7 C2 3 6 1 10 1 L14 0 V12 L10 14 H1Z" fill="#a8ccf4" stroke="#3a70c0" stroke-width="0.6"/><path d="M1 9 C1 5 4 2 9 1" fill="none" stroke="#f0d040" stroke-width="1.5"/><path d="M1 9 V15" stroke="#2a58b0" stroke-width="1.5"/></svg>
<div class="trg" style="left:296px;top:366px"></div>
<svg class="a" style="left:280px;top:379px" width="17" height="16" viewBox="0 0 17 16"><g fill="none" stroke="#2050b0" stroke-width="1.4"><circle cx="2" cy="2" r="1.5"/><circle cx="8" cy="2" r="1.5"/><circle cx="2" cy="8" r="1.5"/><circle cx="8" cy="8" r="1.5"/><path d="M3.5 2 H6.5 M2 3.5 V6.5 M3.5 8 H6.5 M8 3.5 V6.5"/></g><circle cx="12" cy="11" r="4" fill="none" stroke="#e8b060" stroke-width="2"/><g fill="#a06010"><circle cx="12" cy="7" r="1.3"/><circle cx="8" cy="11" r="1.3"/><circle cx="16" cy="11" r="1.3"/><circle cx="12" cy="15" r="1.3"/></g></svg>
<div class="trg" style="left:296px;top:394px"></div>
<svg class="a" style="left:280px;top:402px" width="17" height="14" viewBox="0 0 17 14"><path d="M1 6 L5 2 H7 V13 L1 13Z" fill="#f0e080" stroke="#a08000" stroke-width="0.8"/><path d="M11 13 V2 H13 L16 5 V13Z" fill="#f0e080" stroke="#a08000" stroke-width="0.8"/><path d="M9 0 V14" stroke="#e02020" stroke-width="1.3"/></svg>
<div class="trg" style="left:296px;top:415px"></div>
<svg class="a" style="left:280px;top:430px" width="17" height="14" viewBox="0 0 17 14"><path d="M1 5 L4 1 H15 L16 5 L13 13 H4 L1 9Z" fill="#fff" stroke="#e06060" stroke-width="1.2"/><path d="M6 2 L10 13 H13 L9 2Z" fill="#3a70c8"/><path d="M9 2 L13 2 L16 9 L13 13Z" fill="#a0c8f0"/></svg>
<div class="trg" style="left:296px;top:444px"></div>
<svg class="a" style="left:280px;top:449px" width="17" height="17" viewBox="0 0 17 17"><path d="M1 5 V12 C1 15 16 15 16 12 V5Z" fill="#6a9ad8" stroke="#3a60b0" stroke-width="0.6"/><ellipse cx="8.5" cy="5" rx="7.5" ry="2.5" fill="#d8ecff" stroke="#3a60b0" stroke-width="0.6"/><path d="M2 9 C5 11 12 11 15 9" stroke="#e0f0ff" stroke-width="1" fill="none"/><path d="M6 5 L8 0 L11 5" fill="#fff"/></svg>
<svg class="a" style="left:280px;top:473px" width="17" height="15" viewBox="0 0 17 15"><path d="M1 3 H4 V8 H6 V1 H11 V8 H13 V3 H16 V14 H1Z" fill="#8ab8ee" stroke="#3060b0" stroke-width="0.6"/><path d="M1 3 V14" stroke="#3060b0" stroke-width="2"/><rect x="3" y="10" width="12" height="2" fill="#f0e040"/><rect x="7" y="3" width="3" height="4" fill="#e0a040"/></svg>
<div class="trg" style="left:296px;top:488px"></div>
<svg class="a" style="left:280px;top:500px" width="18" height="17" viewBox="0 0 18 17"><path d="M4 2 V11 L15 16 M4 11 L13 6" fill="none" stroke="#2050b8" stroke-width="1.2"/><path d="M2 4 L4 0 L6 4Z" fill="#2050b8"/><path d="M13 4 L16 6 L12 8Z" fill="#2050b8"/><path d="M14 13 L17 16 L13 16Z" fill="#2050b8"/><circle cx="4" cy="11" r="1.6" fill="none" stroke="#e03020" stroke-width="1"/><path d="M8 2 L10 4 M10 2 L8 4 M14 2 L16 4 M16 2 L15 5 M14 14 L16 16 M16 14 L14 16" stroke="#e03020" stroke-width="0.9"/></svg>
<svg class="a" style="left:280px;top:523px" width="16" height="14" viewBox="0 0 16 14"><path d="M1 4 L15 1 V10 L1 13Z" fill="#e8f2ff" stroke="#7aa8e0" stroke-width="1.4" stroke-linejoin="round"/><path d="M4 5 L12 3.5 V9 L4 10.5Z" fill="#f8fbff"/></svg>
<div class="trg" style="left:296px;top:538px"></div>
<svg class="a" style="left:280px;top:545px" width="17" height="14" viewBox="0 0 17 14"><path d="M1 1 L6 5 L1 9Z" fill="#2a90d0"/><path d="M7 4 C9 2 14 1 16 0 V12 C14 13 9 14 7 14Z" fill="#8a70b8" stroke="#503080" stroke-width="0.6"/><rect x="10" y="4" width="2" height="8" fill="#d8c8f0"/></svg>
<div class="a" style="left:305px;top:133px;width:457px;height:473px;background:#078dd5"></div>
<div class="a" style="left:762px;top:133px;width:2px;height:475px;background:#fff"></div>
<div class="a" style="left:304px;top:132px;width:1px;height:474px;background:#8a7e74"></div>
<div class="a" style="left:305px;top:606px;width:459px;height:2px;background:#fff"></div>
<div class="a" style="left:4px;top:606px;width:301px;height:1px;background:#a8a8b0"></div>
<div class="a" style="left:4px;top:607px;width:301px;height:1px;background:#fff"></div>
<svg class="a" style="left:0;top:0" width="768" height="612" viewBox="0 0 768 612"><path d="M412.3 333.3 C412.3 331.0 414.2 325.5 416.0 322.0 C417.8 318.5 420.5 314.8 423.2 312.3 C425.9 309.8 427.7 307.7 432.3 306.8 C436.9 305.9 443.0 306.0 450.6 306.8 C458.2 307.6 468.6 310.0 478.0 311.4 C487.4 312.8 496.7 313.9 507.0 315.0 C517.3 316.1 529.4 316.6 540.0 317.7 C550.6 318.8 561.5 319.3 570.9 321.7 C580.3 324.1 588.6 329.1 596.6 332.3 C604.6 335.5 613.0 337.8 619.0 340.9 C625.0 344.0 628.6 347.2 632.6 351.2 C636.6 355.2 639.6 360.3 643.0 364.9 C646.4 369.5 650.5 374.6 653.2 378.6 C655.9 382.6 658.3 385.8 659.2 388.9 C660.1 392.0 660.0 394.8 658.4 397.5 C656.8 400.2 654.1 403.3 649.8 405.2 C645.5 407.1 638.3 408.4 632.6 409.1 C626.9 409.8 621.8 409.6 615.5 409.5 C609.2 409.4 601.8 409.5 594.9 408.6 C588.0 407.7 580.6 405.7 574.3 404.3 C568.0 402.9 562.9 401.9 557.2 400.0 C551.5 398.1 544.7 395.2 540.0 393.2 C535.3 391.2 534.8 390.4 529.0 388.0 C523.2 385.6 513.2 381.7 505.3 378.8 C497.4 375.9 489.2 373.2 481.6 370.6 C474.0 368.0 466.4 366.3 459.7 363.4 C453.0 360.5 447.6 357.2 441.5 353.3 C435.4 349.4 427.4 342.6 423.2 339.7 C418.9 336.8 417.8 337.1 416.0 336.0 C414.2 334.9 412.3 335.6 412.3 333.3Z" fill="none" stroke="#fff" stroke-width="1.2"/><ellipse cx="599.5" cy="410" rx="16.3" ry="15" fill="none" stroke="#f00" stroke-width="2.6"/><ellipse cx="255.5" cy="577" rx="19.5" ry="19.5" fill="none" stroke="#f00" stroke-width="3"/><path d="M434.5 505.3 L276 570.4 M284.7 553 L276 570.4 L296.6 577" fill="none" stroke="#f00" stroke-width="3" stroke-linecap="round" stroke-linejoin="round"/></svg>
</body></html>
